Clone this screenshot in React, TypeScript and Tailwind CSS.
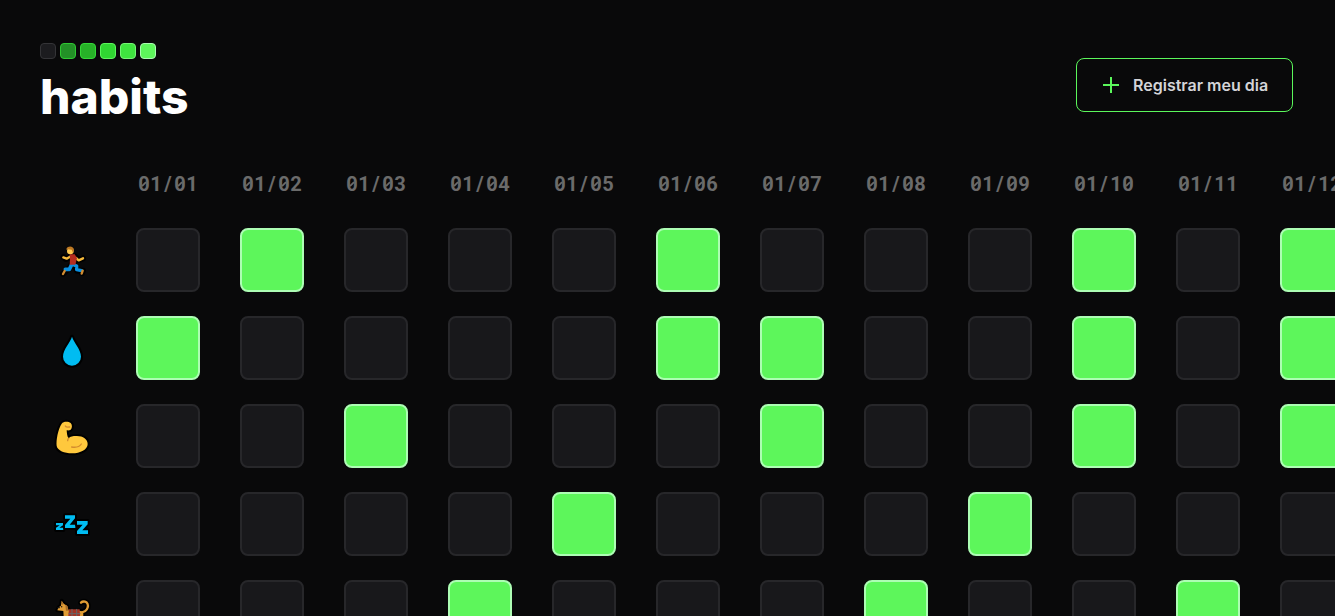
import type { ReactNode } from "react";

const LOGO = [
  "bg-[#1c1c1f] border-[#343437]",
  "bg-[#239027] border-[#2fc832]",
  "bg-[#27b228] border-[#35d838]",
  "bg-[#30d632] border-[#5cf55c]",
  "bg-[#3fe43f] border-[#75f575]",
  "bg-[#5df65b] border-[#a8fcb0]",
];

const outline = { stroke: "#000", strokeWidth: 12, strokeLinejoin: "round" as const, paintOrder: "stroke" as const };

function Runner() {
  return (
    <svg className="size-16" viewBox="-30 -36 192 192" fill="none" strokeLinecap="round" strokeLinejoin="round">
      <g stroke="#000" strokeWidth="18">
        <path d="M61 28v9M64 50L48 57 40 51M76 50l10 10 13-5M67 70L60 82 54 88 39 101M73 74l8 18 18 0 -3 7" />
      </g>
      <path d="M60 50L50 56 40 52" stroke="#f6ba3c" strokeWidth="7" />
      <path d="M78 54l8 7 13-6" stroke="#f6ba3c" strokeWidth="7" />
      <path d="M65 74L58 88H46" stroke="#0a8fe0" strokeWidth="11" />
      <path d="M70 74l10 4v11l15 3" stroke="#0a8fe0" strokeWidth="10" />
      <path d="M44 93l-5 9M98 92l-3 9" stroke="#d18b30" strokeWidth="7" />
      <path d="M59 43h15l7 11-5 20H59l1-18z" fill="#b52c1f" />
      <circle cx="61" cy="33" r="10" fill="#ffca50" />
      <path d="M49 29c0-12 23-14 23 2l-3 7-4-9-11-1z" fill="#bd7824" />
    </svg>
  );
}

function Drop() {
  return (
    <svg className="size-16" viewBox="-30 -36 192 192">
      <path d="M66 26C62 42 39 63 39 86a27 27 0 0 0 54 0C93 63 70 42 66 26z" fill="#00bcf2" {...outline} />
    </svg>
  );
}

function Arm() {
  return (
    <svg className="size-16" viewBox="-30 -30 192 192">
      <path
        d="M35 29c5-7 20-7 27-2 5 5 5 15 0 20-4 3-9 2-12 2 1 10 1 19 6 24 5-6 13-7 22-7 20-1 35 9 35 24 0 17-22 28-47 28-23 0-43-8-46-22-2-18 4-50 15-67z"
        fill="#ffc83d"
        {...outline}
      />
      <path d="M46 36c2 5 7 4 13 3M65 99c12 2 24-1 29-9M56 73c-3 3-3 5-3 7" stroke="#d48c2e" strokeWidth="4" fill="none" strokeLinecap="round" />
    </svg>
  );
}

function Sleep() {
  return (
    <svg className="size-16" viewBox="-30 -30 192 192">
      <g fill="#00bcf2" {...outline}>
        <path d="M18 63h21v7L28 77h12v7H18v-7l11-7H18z" />
        <path d="M45 40h30v9L59 68h17v10H45v-9l16-19H45z" />
        <path d="M81 57h32v10L97 85h17v11H81v-9l17-19H81z" />
      </g>
    </svg>
  );
}

function Dog() {
  return (
    <svg className="size-16" viewBox="-30 -18 192 192">
      <g strokeLinecap="round" strokeLinejoin="round">
        <path d="M91 78c25 0 29-27 14-31-5-1-9 0-12 3" fill="none" stroke="#000" strokeWidth="17" />
        <path d="M35 44l6 9 10 6 6 16 33-1 10 8-1 25H42L40 75l-18-2 4-9 7-5z" fill="#e19d35" {...outline} />
        <path d="M91 79c25 0 29-28 14-32-5-1-9 0-12 3" fill="none" stroke="#e19d35" strokeWidth="7" />
        <path d="M35 45l6 8-4 5zM46 56l7 5 1 13h-6z" fill="#a96d28" />
        <path d="M57 70h32l2 37H53z" fill="#a43426" />
        <path d="M66 70v30M80 70v30M57 83h33" stroke="#64666a" strokeWidth="3" />
        <path d="M24 65h4" stroke="#191919" strokeWidth="4" />
        <circle cx="35" cy="62" r="2.2" fill="#191919" />
      </g>
    </svg>
  );
}

const HABITS: { name: string; icon: ReactNode; done: number[] }[] = [
  { name: "run", icon: <Runner />, done: [2, 6, 10, 12] },
  { name: "water", icon: <Drop />, done: [1, 6, 7, 10, 12] },
  { name: "workout", icon: <Arm />, done: [3, 7, 10, 12] },
  { name: "sleep", icon: <Sleep />, done: [5, 9] },
  { name: "dog", icon: <Dog />, done: [4, 8, 11] },
];

const DAYS = Array.from({ length: 12 }, (_, i) => i + 1);

function Digits({ value }: { value: string }) {
  return (
    <>
      {value.split("").map((d, i) => (
        <span key={i} className="relative inline-block w-3 text-center">
          {d}
          {d === "0" && (
            <svg className="absolute left-0 top-0 h-6 w-3" viewBox="0 0 12 24" fill="none">
              <path d="M4 14.2l4-4" stroke="#6b6b6b" strokeWidth="1.8" />
            </svg>
          )}
        </span>
      ))}
    </>
  );
}

export default function App() {
  return (
    <div className="flex h-[616px] w-full flex-col overflow-hidden bg-[#09090a] font-['Inter',sans-serif] text-white">
      <header className="flex h-[172px] shrink-0 items-start justify-between pl-10 pr-[42px]">
        <div className="pt-[43px]">
          <div className="flex gap-1">
            {LOGO.map((c) => (
              <div key={c} className={`size-4 rounded border ${c}`} />
            ))}
          </div>
          <h1 className="mt-[14px] text-[48px] font-extrabold leading-[48px]">habits</h1>
        </div>
        <button className="mt-[58px] flex h-[54px] w-[217px] items-center gap-3 rounded-lg border border-[#5bf75b] pl-6">
          <svg className="size-5 shrink-0" viewBox="0 0 20 20" stroke="#5bf75b" strokeWidth="2" fill="none">
            <path d="M10 2v16M2 10h16" />
          </svg>
          <span className="whitespace-nowrap text-base font-semibold text-[#d4d4d8]">Registrar meu dia</span>
        </button>
      </header>
      <main className="flex flex-col gap-8 pl-10">
        <div className="flex gap-10 pl-24">
          {DAYS.map((d) => (
            <div key={d} className="flex h-6 w-16 shrink-0 justify-center whitespace-nowrap font-['Roboto',sans-serif] text-[20px] font-bold leading-6 text-[#6b6b6b]">
              <Digits value="01" />
              <span className="w-3 text-center">/</span>
              <Digits value={String(d).padStart(2, "0")} />
            </div>
          ))}
        </div>
        <div className="flex flex-col gap-6">
          {HABITS.map((h) => (
            <div key={h.name} className="flex gap-8">
              <div className="size-16 shrink-0">{h.icon}</div>
              <div className="flex gap-10">
                {DAYS.map((d) => (
                  <div
                    key={d}
                    className={
                      h.done.includes(d)
                        ? "size-16 shrink-0 rounded-lg border-2 border-[#adfdb4] bg-[#5df65b]"
                        : "size-16 shrink-0 rounded-lg border-2 border-[#27272a] bg-[#18181b]"
                    }
                  />
                ))}
              </div>
            </div>
          ))}
        </div>
      </main>
    </div>
  );
}
